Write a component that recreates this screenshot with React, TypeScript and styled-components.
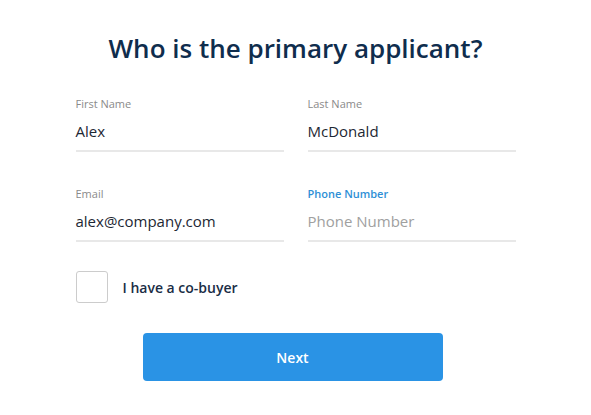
import styled, { createGlobalStyle } from 'styled-components'

const GlobalStyle = createGlobalStyle`
  body {
    margin: 0;
    background: #ffffff;
    font-family: 'Open Sans', 'Noto Sans', sans-serif;
  }
`

interface IFieldProps {
  label: string
  value?: string
  placeholder?: string
  active?: boolean
}

function Field({ label, value, placeholder, active = false }: IFieldProps) {
  return (
    <FieldContainer>
      <Label active={active}>{label}</Label>
      <Value empty={!value}>{value || placeholder}</Value>
    </FieldContainer>
  )
}

export default function App() {
  return (
    <Page>
      <GlobalStyle />
      <Title>Who is the primary applicant?</Title>
      <Form>
        <Grid>
          <Field label="First Name" value="Alex" />
          <Field label="Last Name" value="McDonald" />
          <Field label="Email" value="alex@company.com" />
          <Field label="Phone Number" placeholder="Phone Number" active />
        </Grid>
        <CheckRow>
          <Checkbox />
          <span>I have a co-buyer</span>
        </CheckRow>
        <NextButton>Next</NextButton>
      </Form>
    </Page>
  )
}

const Page = styled.div`
  align-items: center;
  display: flex;
  flex-direction: column;
  padding-top: 30px;
`

const Title = styled.h1`
  color: #0f2d4d;
  font-size: 26px;
  font-weight: 600;
  line-height: 36px;
  margin: 0 0 31px 0;
  text-align: center;
`

const Form = styled.div`
  align-items: center;
  display: flex;
  flex-direction: column;
  width: 440px;
`

const Grid = styled.div`
  column-gap: 24px;
  display: grid;
  grid-template-columns: 208px 208px;
  row-gap: 35px;
  width: 100%;
`

const FieldContainer = styled.div`
  border-bottom: solid 2px #e8e8e8;
  display: flex;
  flex-direction: column;
  height: 53px;
`

const Label = styled.div<{ active: boolean }>`
  color: ${({ active }) => (active ? '#2e8fd6' : '#8a8a8a')};
  font-size: 11px;
  font-weight: ${({ active }) => (active ? 600 : 400)};
  line-height: 14px;
`

const Value = styled.div<{ empty: boolean }>`
  color: ${({ empty }) => (empty ? '#a0a0a0' : '#1d2733')};
  font-size: 15px;
  line-height: 20px;
  margin-top: 10px;
`

const CheckRow = styled.label`
  align-items: center;
  align-self: flex-start;
  color: #1a2d45;
  display: flex;
  flex-direction: row;
  font-size: 14px;
  font-weight: 600;
  gap: 15px;
  margin-top: 29px;
`

const Checkbox = styled.div`
  border: solid 1px #cccccc;
  border-radius: 3px;
  box-sizing: border-box;
  height: 32px;
  width: 32px;
`

const NextButton = styled.button`
  background-color: #2a93e5;
  border: none;
  border-radius: 4px;
  color: #ffffff;
  font-family: 'Open Sans', 'Noto Sans', sans-serif;
  font-size: 14px;
  font-weight: 600;
  height: 48px;
  margin-top: 30px;
  margin-right: 6px;
  width: 300px;
`
